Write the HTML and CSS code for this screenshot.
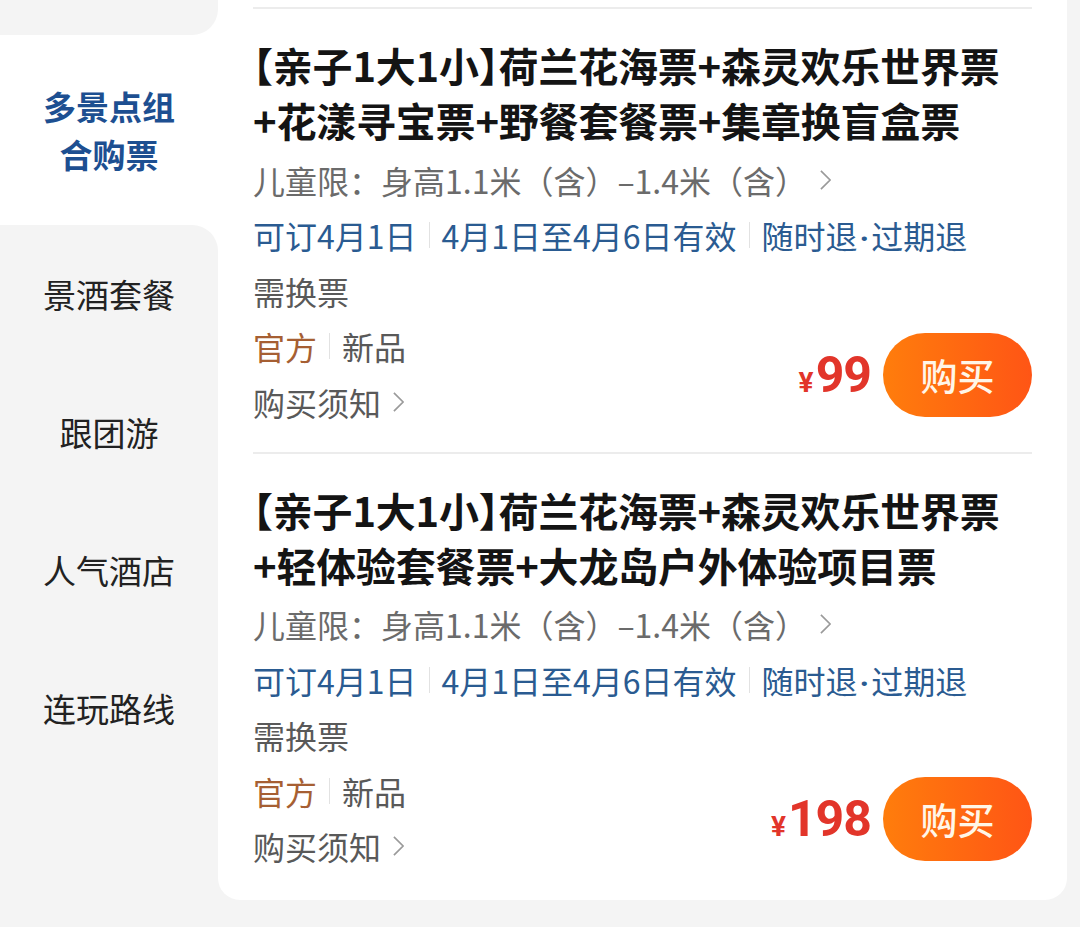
FILE: index.html
```html
<!DOCTYPE html>
<html lang="zh-CN">
<head>
    <meta charset="UTF-8">
    <meta name="viewport" content="width=device-width, initial-scale=1.0">
    <title>多景点组合购票</title>
    <link rel="stylesheet" href="styles.css">
</head>
<body>
    <div class="page">
        <div class="side-nav">
            <div class="nav-item nav-prev"></div>
            <div class="nav-item active">多景点组<br>合购票</div>
            <div class="nav-item nav-next">景酒套餐</div>
            <div class="nav-item">跟团游</div>
            <div class="nav-item">人气酒店</div>
            <div class="nav-item">连玩路线</div>
            <div class="nav-item nav-rest"></div>
        </div>

        <div class="product-list">
            <div class="product">
                <div class="product-title">【亲子1大1小】荷兰花海票+森灵欢乐世界票+花漾寻宝票+野餐套餐票+集章换盲盒票</div>
                <div class="row row-full muted">儿童限：身高1.1米（含）–1.4米（含）<svg class="chevron" viewBox="0 0 12 22"><path d="M1 1l10 10L1 21"/></svg></div>
                <div class="row row-full blue">
                    <span>可订4月1日</span><i class="sep"></i><span>4月1日至4月6日有效</span><i class="sep"></i><span>随时退<span class="dot">·</span>过期退</span>
                </div>
                <div class="row row-full dark">需换票</div>
                <div class="row dark"><span class="official">官方</span><i class="sep"></i><span>新品</span></div>
                <div class="row dark">购买须知<svg class="chevron chevron-near" viewBox="0 0 12 22"><path d="M1 1l10 10L1 21"/></svg></div>
                <div class="buy">
                    <span class="price"><small>¥</small>99</span>
                    <button class="buy-btn">购买</button>
                </div>
            </div>

            <div class="product">
                <div class="product-title">【亲子1大1小】荷兰花海票+森灵欢乐世界票+轻体验套餐票+大龙岛户外体验项目票</div>
                <div class="row row-full muted">儿童限：身高1.1米（含）–1.4米（含）<svg class="chevron" viewBox="0 0 12 22"><path d="M1 1l10 10L1 21"/></svg></div>
                <div class="row row-full blue">
                    <span>可订4月1日</span><i class="sep"></i><span>4月1日至4月6日有效</span><i class="sep"></i><span>随时退<span class="dot">·</span>过期退</span>
                </div>
                <div class="row row-full dark">需换票</div>
                <div class="row dark"><span class="official">官方</span><i class="sep"></i><span>新品</span></div>
                <div class="row dark">购买须知<svg class="chevron chevron-near" viewBox="0 0 12 22"><path d="M1 1l10 10L1 21"/></svg></div>
                <div class="buy">
                    <span class="price"><small>¥</small>198</span>
                    <button class="buy-btn">购买</button>
                </div>
            </div>
        </div>
    </div>
</body>
</html>
```

FILE: styles.css
```css
body {
    margin: 0;
    padding: 0;
    background-color: #f4f4f4;
    font-family: "Noto Sans CJK SC", "Noto Sans", sans-serif;
    overflow: hidden;
}

.page {
    display: flex;
    height: 927px;
}

/* left category menu */
.side-nav {
    display: flex;
    flex-direction: column;
    width: 218px;
    flex-shrink: 0;
    background-color: #fff;
}

.nav-item {
    display: flex;
    align-items: center;
    justify-content: center;
    height: 138px;
    background-color: #f4f4f4;
    color: #222;
    font-size: 33px;
    text-align: center;
}

.nav-prev {
    height: 35px;
    border-bottom-right-radius: 26px;
}

.nav-item.active {
    height: 190px;
    background-color: #fff;
    color: #1d4f91;
    font-weight: 700;
    line-height: 48px;
}

.nav-next {
    border-top-right-radius: 26px;
}

.nav-rest {
    flex: 1;
}

/* product card */
.product-list {
    width: 849px;
    height: 900px;
    padding-top: 7px;
    box-sizing: border-box;
    background-color: #fff;
    border-radius: 0 0 22px 22px;
}

.product {
    display: grid;
    grid-template-columns: 1fr auto;
    margin: 0 35px 0 35px;
    padding: 29px 0 22px;
    border-top: 2px solid #ececec;
}

.product-title {
    grid-column: 1 / -1;
    margin-bottom: 4px;
    color: #141414;
    font-size: 40px;
    font-weight: 700;
    line-height: 55px;
    letter-spacing: -0.2px;
    font-feature-settings: "halt";
}

.row {
    display: flex;
    align-items: center;
    height: 55.5px;
    font-size: 32px;
    white-space: nowrap;
}

.row-full {
    grid-column: 1 / -1;
}

.muted {
    color: #6b6b6b;
}

.dark {
    color: #595959;
}

.blue {
    color: #2a5b91;
}

.official {
    color: #a65f33;
}

.dot {
    font-family: Roboto, sans-serif;
    font-weight: 700;
    margin: 0 2px;
}

.sep {
    display: inline-block;
    width: 1px;
    height: 26px;
    margin: 0 12px;
    background-color: #e2e2e2;
}

.chevron {
    width: 11px;
    height: 22px;
    margin-left: 13px;
    fill: none;
    stroke: #9a9a9a;
    stroke-width: 1.8;
}

.chevron-near {
    margin-left: 12px;
}

.buy {
    grid-column: 2;
    grid-row: 5 / span 2;
    align-self: end;
    display: flex;
    align-items: center;
    margin-bottom: 13px;
}

.price {
    margin-right: 12px;
    color: #e2352a;
    font-family: Roboto, "Noto Sans", sans-serif;
    font-size: 50px;
    font-weight: 700;
    letter-spacing: -1px;
}

.price small {
    margin-right: 3px;
    font-size: 28px;
}

.buy-btn {
    width: 149px;
    height: 84px;
    border: none;
    border-radius: 42px;
    background: linear-gradient(90deg, #ff7d0c, #ff5515);
    color: #fff6e8;
    font-family: "Noto Sans CJK SC", sans-serif;
    font-size: 37px;
    font-weight: 500;
    padding: 0;
}
```
